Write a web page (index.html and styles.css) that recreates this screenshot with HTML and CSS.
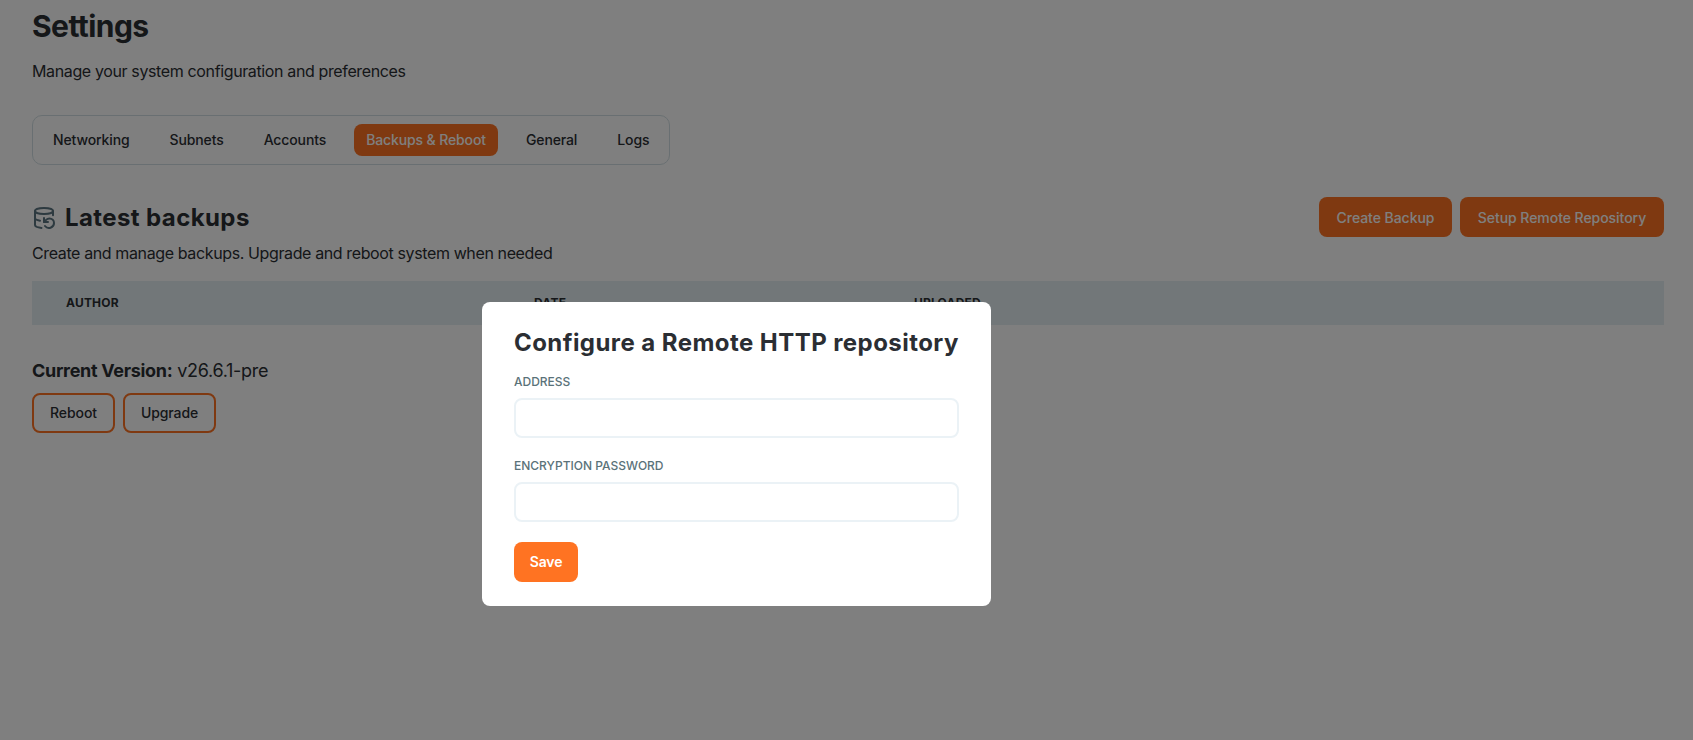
FILE: index.html
```html
<!DOCTYPE html>
<html lang="en">
<head>
<meta charset="utf-8">
<title>Settings</title>
<link rel="stylesheet" href="styles.css">
</head>
<body>
<main class="page">
  <h1 class="page-title">Settings</h1>
  <p class="page-sub">Manage your system configuration and preferences</p>
  <nav class="tabs">
    <a class="tab">Networking</a>
    <a class="tab">Subnets</a>
    <a class="tab">Accounts</a>
    <a class="tab tab-active">Backups &amp; Reboot</a>
    <a class="tab">General</a>
    <a class="tab">Logs</a>
  </nav>
  <section class="head-row">
    <h2 class="section-title">
      <svg class="section-icon" viewBox="0 0 24 24" fill="none" stroke="currentColor" stroke-width="2" stroke-linecap="round" stroke-linejoin="round"><ellipse cx="12" cy="5" rx="9" ry="3"/><path d="M3 12a9 3 0 0 0 5 2.69"/><path d="M21 9.3V5"/><path d="M3 5v14a9 3 0 0 0 6.47 2.88"/><path d="M12 12v4h4"/><path d="M13 20a5 5 0 0 0 9-3 4.5 4.5 0 0 0-4.5-4.5c-1.33 0-2.54.54-3.41 1.41L12 16"/></svg>
      Latest backups
    </h2>
    <div class="head-actions">
      <button class="btn btn-solid btn-create">Create Backup</button>
      <button class="btn btn-solid btn-setup">Setup Remote Repository</button>
    </div>
  </section>
  <p class="section-sub">Create and manage backups. Upgrade and reboot system when needed</p>
  <div class="table-head">
    <span>Author</span>
    <span>Date</span>
    <span>Uploaded</span>
  </div>
  <p class="version"><strong>Current Version:</strong> v26.6.1-pre</p>
  <div class="version-actions">
    <button class="btn btn-outline btn-reboot">Reboot</button>
    <button class="btn btn-outline btn-upgrade">Upgrade</button>
  </div>
</main>
<div class="overlay"></div>
<form class="modal">
  <h3 class="modal-title">Configure a Remote HTTP repository</h3>
  <label class="field-label" for="addr">Address</label>
  <input class="field-input" id="addr" type="text">
  <label class="field-label field-label-second" for="pw">Encryption password</label>
  <input class="field-input" id="pw" type="password">
  <button type="button" class="btn btn-save">Save</button>
</form>
</body>
</html>
```
FILE: styles.css
```css
* { box-sizing: border-box; }
html, body { margin: 0; height: 100%; }
body {
  background: #fff;
  color: #2b2e33;
  font-family: Inter, "Liberation Sans", sans-serif;
  overflow: hidden;
}
.page { padding: 8px 29px 0 32px; }
.page-title {
  margin: 0;
  font-size: 30px;
  line-height: 36px;
  font-weight: 700;
  letter-spacing: -0.55px;
}
.page-sub {
  margin: 15px 0 0;
  font-size: 16px;
  line-height: 24px;
  letter-spacing: -0.37px;
}
.tabs {
  display: inline-flex;
  gap: 16px;
  margin-top: 32px;
  padding: 8px;
  border: 1px solid #d3dfe4;
  border-radius: 10px;
  vertical-align: top;
}
.tab {
  padding: 0 12px;
  font-size: 14px;
  line-height: 32px;
  height: 32px;
  font-weight: 500;
  letter-spacing: -0.12px;
  border-radius: 8px;
}
.tab-active { background: #ff7322; color: #fff; }
.head-row {
  display: flex;
  justify-content: space-between;
  align-items: center;
  margin-top: 32px;
}
.section-title {
  display: flex;
  align-items: center;
  gap: 9px;
  margin: 0;
  font-size: 24px;
  line-height: 32px;
  font-weight: 700;
  letter-spacing: 0.4px;
  transform: translateY(1px);
}
.section-icon { width: 24px; height: 24px; color: #5b7480; }
.head-actions { display: flex; gap: 8px; }
.btn {
  height: 40px;
  border-radius: 8px;
  font-family: inherit;
  font-size: 14px;
  font-weight: 500;
  padding: 0;
  cursor: pointer;
}
.btn-solid { background: #ff7322; border: 0; color: #fff; font-weight: 500; letter-spacing: -0.05px; }
.btn-create { width: 133px; }
.btn-setup { width: 204px; }
.section-sub {
  margin: 4px 0 0;
  font-size: 16px;
  line-height: 24px;
  letter-spacing: -0.38px;
}
.table-head {
  display: grid;
  grid-template-columns: 468px 380px 1fr;
  align-items: center;
  height: 44px;
  margin-top: 16px;
  padding: 0 0 2px 34px;
  background: #e4eef2;
  font-size: 12px;
  font-weight: 700;
  letter-spacing: 0.2px;
  text-transform: uppercase;
}
.version {
  margin: 34px 0 0;
  font-size: 18px;
  line-height: 24px;
  letter-spacing: -0.3px;
}
.version strong { font-weight: 700; }
.version-actions { display: flex; gap: 8px; margin-top: 10px; }
.btn-outline {
  background: #fff;
  border: 2px solid #ff7322;
  color: #2b2e33;
  letter-spacing: -0.1px;
  padding-bottom: 1px;
}
.btn-reboot { width: 83px; }
.btn-upgrade { width: 93px; }
.overlay {
  position: fixed;
  inset: 0;
  background: rgba(0, 0, 0, 0.5);
}
.modal {
  position: fixed;
  left: 482px;
  top: 302px;
  width: 509px;
  height: 304px;
  padding: 25px 32px 24px;
  background: #fff;
  border-radius: 8px;
  display: flex;
  flex-direction: column;
  align-items: flex-start;
}
.modal-title {
  margin: 0;
  font-size: 24px;
  line-height: 32px;
  font-weight: 700;
  letter-spacing: 0.44px;
  white-space: nowrap;
}
.field-label {
  margin-top: 15px;
  font-size: 12px;
  line-height: 16px;
  font-weight: 500;
  color: #5a7279;
  text-transform: uppercase;
}
.field-label-second { margin-top: 20px; }
.field-input {
  display: block;
  width: 100%;
  height: 40px;
  margin-top: 8px;
  border: 2px solid #ebf2f6;
  border-radius: 8px;
  background: #fff;
  outline: 0;
}
.btn-save {
  width: 64px;
  margin-top: 20px;
  padding-bottom: 1px;
  background: #ff7322;
  border: 0;
  color: #fff;
  font-weight: 600;
  letter-spacing: -0.1px;
}
```
